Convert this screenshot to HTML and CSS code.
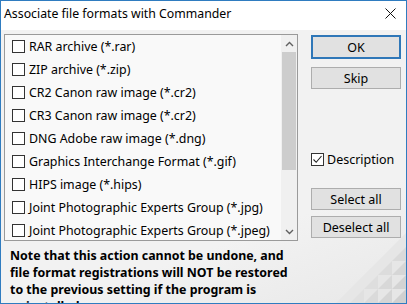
FILE: index.html
```html
<!DOCTYPE html>
<html>
<head>
	<meta charset="utf-8" />
	<title>Associate file formats with Commander</title>
	<link rel="stylesheet" href="styles.css">
</head>
<body>
<div class="window">
	<div class="titlebar">
		<span class="title">Associate file formats with Commander</span>
		<svg class="close" width="11" height="11" viewBox="0 0 11 11">
			<path d="M0.5 0.5 L10.5 10.5 M10.5 0.5 L0.5 10.5" stroke="#111" stroke-width="1" fill="none"/>
		</svg>
	</div>
	<div class="dialog">
		<div class="left">
			<div class="list">
				<div class="items">
					<label class="row"><span class="box"></span>RAR archive (*.rar)</label>
					<label class="row"><span class="box"></span>ZIP archive (*.zip)</label>
					<label class="row"><span class="box"></span>CR2 Canon raw image (*.cr2)</label>
					<label class="row"><span class="box"></span>CR3 Canon raw image (*.cr2)</label>
					<label class="row"><span class="box"></span>DNG Adobe raw image (*.dng)</label>
					<label class="row"><span class="box"></span>Graphics Interchange Format (*.gif)</label>
					<label class="row"><span class="box"></span>HIPS image (*.hips)</label>
					<label class="row"><span class="box"></span>Joint Photographic Experts Group (*.jpg)</label>
					<label class="row"><span class="box"></span>Joint Photographic Experts Group (*.jpeg)</label>
				</div>
				<div class="scrollbar">
					<div class="arrow">
						<svg width="9" height="6" viewBox="0 0 9 6"><path d="M1 5 L4.5 1.5 L8 5" stroke="#606060" stroke-width="1.4" fill="none"/></svg>
					</div>
					<div class="track"><div class="thumb"></div></div>
					<div class="arrow">
						<svg width="9" height="6" viewBox="0 0 9 6"><path d="M1 1 L4.5 4.5 L8 1" stroke="#606060" stroke-width="1.4" fill="none"/></svg>
					</div>
				</div>
			</div>
			<p class="note">Note that this action cannot be undone, and file format registrations will NOT be restored to the previous setting if the program is uninstalled.</p>
		</div>
		<div class="right">
			<button class="btn default">OK</button>
			<button class="btn skip">Skip</button>
			<label class="desc"><span class="box checked">
				<svg width="11" height="11" viewBox="0 0 11 11"><path d="M1.5 5.5 L4.2 8.3 L9.5 2" stroke="#222" stroke-width="1.1" fill="none"/></svg>
			</span>Description</label>
			<button class="btn sel">Select all</button>
			<button class="btn desel">Deselect all</button>
		</div>
		<svg class="deco" width="70" height="70" viewBox="0 0 70 70">
			<polygon points="70,0 70,70 0,70" fill="#e6e6e6"/>
			<polygon points="70,14 56,28 70,28" fill="#dadada"/>
			<polygon points="56,28 42,42 56,42" fill="#dcdcdc"/>
			<polygon points="70,28 56,42 70,42" fill="#d6d6d6"/>
			<polygon points="42,42 28,56 42,56" fill="#dedede"/>
			<polygon points="56,42 42,56 56,56" fill="#d8d8d8"/>
			<polygon points="70,42 56,56 70,56" fill="#d3d3d3"/>
			<polygon points="28,56 14,70 28,70" fill="#e0e0e0"/>
			<polygon points="42,56 28,70 42,70" fill="#dadada"/>
			<polygon points="56,56 42,70 56,70" fill="#d5d5d5"/>
			<polygon points="70,56 56,70 70,70" fill="#d0d0d0"/>
		</svg>
	</div>
</div>
</body>
</html>
```

FILE: styles.css
```css
html, body {
	margin: 0;
	padding: 0;
}
body {
	font-family: "Noto Sans", "Open Sans", sans-serif;
	font-size: 12.4px;
	color: #000;
}
.window {
	width: 407px;
	height: 304px;
	box-sizing: border-box;
	border: 1px solid #2f7cc0;
	display: flex;
	flex-direction: column;
	overflow: hidden;
}
.titlebar {
	height: 29px;
	flex: none;
	background: #fff;
	display: flex;
	align-items: center;
	justify-content: space-between;
	padding: 0 10px 0 3px;
}
.title {
	font-size: 12.3px;
	margin-top: -4px;
}
.close {
	margin-top: -4px;
}
.dialog {
	flex: 1;
	position: relative;
	background: linear-gradient(160deg, #f2f2f2 70%, #e8e8e8 100%);
	display: flex;
	padding: 4px 5px 0 3px;
	overflow: hidden;
}
.left {
	width: 294px;
	flex: none;
	position: relative;
	z-index: 1;
}
.list {
	height: 207px;
	box-sizing: border-box;
	border: 1px solid #9a9a9a;
	background: #f9f9f9;
	display: flex;
	overflow: hidden;
}
.items {
	flex: 1;
}
.row {
	height: 23px;
	display: flex;
	align-items: center;
	padding-left: 7px;
	white-space: nowrap;
}
.box {
	width: 13px;
	height: 13px;
	box-sizing: border-box;
	border: 1px solid #333;
	background: #fff;
	margin-right: 4px;
	flex: none;
	display: flex;
	align-items: center;
	justify-content: center;
}
.scrollbar {
	width: 16px;
	flex: none;
	background: #f0f0f0;
	display: flex;
	flex-direction: column;
}
.arrow {
	height: 17px;
	display: flex;
	align-items: center;
	justify-content: center;
}
.track {
	flex: 1;
}
.thumb {
	height: 118px;
	margin: 0 1px;
	background: #cdcdcd;
}
.note {
	margin: 6px 0 0 6px;
	font-weight: bold;
	font-size: 12.4px;
	line-height: 17px;
}
.right {
	width: 90px;
	margin-left: 13px;
	display: flex;
	flex-direction: column;
	position: relative;
	z-index: 1;
}
.btn {
	font-family: inherit;
	font-size: 12.5px;
	width: 90px;
	height: 22px;
	padding: 0;
	background: #e1e1e1;
	border: 1px solid #adadad;
	color: #000;
}
.default {
	height: 24px;
	margin-top: 1px;
	border: 2px solid #2f77b8;
}
.skip {
	margin-top: 8px;
}
.desc {
	display: flex;
	align-items: center;
	margin-top: 63px;
	font-size: 12.5px;
	height: 14px;
}
.desc .box {
	margin-right: 3px;
}
.sel {
	margin-top: 22px;
}
.desel {
	margin-top: 6px;
}
.deco {
	position: absolute;
	right: 0;
	bottom: 0;
}
```
